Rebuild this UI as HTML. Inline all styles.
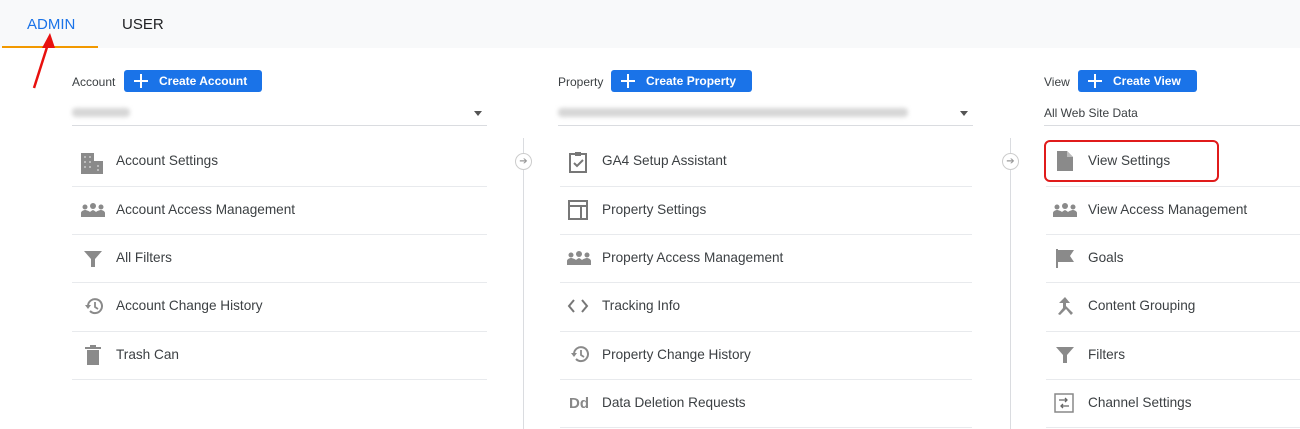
<!DOCTYPE html>
<html><head><meta charset="utf-8"><style>
*{margin:0;padding:0;box-sizing:border-box}
body{width:1300px;height:429px;overflow:hidden;background:#fff;font-family:"Liberation Sans",Arial,sans-serif;position:relative;color:#3c4043}
.a{position:absolute}
.tabbar{left:0;top:0;width:1300px;height:48px;background:#f8f9fa}
.tab{font-size:15px;top:16px}
.lbl{font-size:12px;color:#3c4043;top:75px}
.btn{top:70px;height:22px;background:#1a73e8;border-radius:3px;color:#fff;font-size:12px;font-weight:bold;line-height:22px;padding-left:35px}
.btn:before{content:"";position:absolute;left:10px;top:10px;width:14px;height:2px;background:#fff}
.btn:after{content:"";position:absolute;left:16px;top:4px;width:2px;height:14px;background:#fff}
.blur{top:108px;height:9px;background:#d6d6d6;border-radius:4px;filter:blur(2px)}
.ul{top:125px;height:1px;background:#dadce0}
.caret{top:111px;width:0;height:0;border-left:4px solid transparent;border-right:4px solid transparent;border-top:5px solid #555}
.t{font-size:13.6px;line-height:16px}
.d{height:1px;background:#e8eaed}
.vl{width:1px;background:#dadce0;top:138px;height:291px}
.circ{width:17px;height:17px;border:1px solid #ccc;border-radius:50%;background:#fff;color:#999;font-size:10px;text-align:center;line-height:15px}
svg{position:absolute}
</style></head><body>
<div class="a tabbar"></div>
<div class="a tab" style="left:27px;color:#1a73e8">ADMIN</div>
<div class="a tab" style="left:122px;color:#202124">USER</div>
<div class="a" style="left:2px;top:46px;width:96px;height:2px;background:#f29900"></div>
<svg style="left:30px;top:30px" width="30" height="62"><path d="M4 58 L18 14" stroke="#e8100e" stroke-width="2.5"/><path d="M20 3 L12 18 L25 18 Z" fill="#e8100e"/></svg>

<div class="a lbl" style="left:72px">Account</div>
<div class="a btn" style="left:124px;width:138px">Create Account</div>
<div class="a blur" style="left:72px;width:58px"></div>
<div class="a caret" style="left:474px"></div>
<div class="a ul" style="left:72px;width:415px"></div>

<div class="a lbl" style="left:558px">Property</div>
<div class="a btn" style="left:611px;width:141px">Create Property</div>
<div class="a blur" style="left:558px;width:350px"></div>
<div class="a caret" style="left:960px"></div>
<div class="a ul" style="left:558px;width:415px"></div>

<div class="a lbl" style="left:1044px">View</div>
<div class="a btn" style="left:1078px;width:119px">Create View</div>
<div class="a" style="left:1044px;top:106px;font-size:12px">All Web Site Data</div>
<div class="a ul" style="left:1044px;width:256px"></div>

<div class="a vl" style="left:523px"></div>
<div class="a vl" style="left:1010px"></div>
<div class="a circ" style="left:515px;top:153px">➔</div>
<div class="a circ" style="left:1002px;top:153px">➔</div>

<div class="a t" style="left:116px;top:153px">Account Settings</div>
<div class="a t" style="left:116px;top:202px">Account Access Management</div>
<div class="a t" style="left:116px;top:250px">All Filters</div>
<div class="a t" style="left:116px;top:298px">Account Change History</div>
<div class="a t" style="left:116px;top:347px">Trash Can</div>
<div class="a d" style="left:72px;width:415px;top:186px"></div>
<div class="a d" style="left:72px;width:415px;top:234px"></div>
<div class="a d" style="left:72px;width:415px;top:282px"></div>
<div class="a d" style="left:72px;width:415px;top:331px"></div>
<div class="a d" style="left:72px;width:415px;top:379px"></div>

<svg style="left:80px;top:152px" width="24" height="22"><path d="M1 1h13v21H1z M14 9h9v13h-9z" fill="#8a8a8a"/><g fill="#bbb"><rect x="4" y="4" width="2" height="2"/><rect x="9" y="4" width="2" height="2"/><rect x="4" y="9" width="2" height="2"/><rect x="9" y="9" width="2" height="2"/><rect x="4" y="14" width="2" height="2"/><rect x="9" y="14" width="2" height="2"/><rect x="17" y="13" width="2" height="2"/><rect x="17" y="17" width="2" height="2"/></g></svg>
<svg style="left:81px;top:203px" width="24" height="14"><g fill="#8a8a8a"><circle cx="12" cy="3" r="3"/><circle cx="4" cy="4" r="2.5"/><circle cx="20" cy="4" r="2.5"/><path d="M0 14v-4c0-2 3-3 4-3s4 1 5 2c1-1 3-2 3-2s2 1 3 2c1-1 4-2 5-2s4 1 4 3v4z"/></g></svg>
<svg style="left:83px;top:250px" width="20" height="18"><path d="M1 1h18l-7 8v8h-4v-8z" fill="#8a8a8a"/></svg>
<svg style="left:84px;top:297px" width="20" height="18"><path d="M4 9a7 7 0 1 1 2 5" fill="none" stroke="#8a8a8a" stroke-width="2"/><path d="M1 8l3 4 3-4z" fill="#8a8a8a"/><path d="M11 5v5l3 2" fill="none" stroke="#8a8a8a" stroke-width="1.8"/></svg>
<svg style="left:85px;top:345px" width="16" height="20"><path d="M0 2h16v2H0z M5 0h6v2H5z M2 5h12v15H2z" fill="#8a8a8a"/></svg>

<div class="a t" style="left:602px;top:153px">GA4 Setup Assistant</div>
<div class="a t" style="left:602px;top:202px">Property Settings</div>
<div class="a t" style="left:602px;top:250px">Property Access Management</div>
<div class="a t" style="left:602px;top:298px">Tracking Info</div>
<div class="a t" style="left:602px;top:347px">Property Change History</div>
<div class="a t" style="left:602px;top:395px">Data Deletion Requests</div>
<div class="a d" style="left:560px;width:412px;top:186px"></div>
<div class="a d" style="left:560px;width:412px;top:234px"></div>
<div class="a d" style="left:560px;width:412px;top:282px"></div>
<div class="a d" style="left:560px;width:412px;top:331px"></div>
<div class="a d" style="left:560px;width:412px;top:379px"></div>
<div class="a d" style="left:560px;width:412px;top:427px"></div>

<svg style="left:568px;top:151px" width="20" height="22"><path d="M2 3h16v18H2z" fill="none" stroke="#777" stroke-width="2"/><path d="M7 1h6v4H7z" fill="#777"/><path d="M6 12l3 3 6-6" fill="none" stroke="#777" stroke-width="2"/></svg>
<svg style="left:568px;top:200px" width="20" height="20"><path d="M1 1h18v18H1z M1 6h18 M13 6v13" fill="none" stroke="#777" stroke-width="2"/></svg>
<svg style="left:567px;top:251px" width="24" height="14"><g fill="#8a8a8a"><circle cx="12" cy="3" r="3"/><circle cx="4" cy="4" r="2.5"/><circle cx="20" cy="4" r="2.5"/><path d="M0 14v-4c0-2 3-3 4-3s4 1 5 2c1-1 3-2 3-2s2 1 3 2c1-1 4-2 5-2s4 1 4 3v4z"/></g></svg>
<svg style="left:567px;top:299px" width="22" height="14"><path d="M7 1L2 7l5 6 M15 1l5 6-5 6" fill="none" stroke="#777" stroke-width="2"/></svg>
<svg style="left:570px;top:345px" width="20" height="18"><path d="M4 9a7 7 0 1 1 2 5" fill="none" stroke="#8a8a8a" stroke-width="2"/><path d="M1 8l3 4 3-4z" fill="#8a8a8a"/><path d="M11 5v5l3 2" fill="none" stroke="#8a8a8a" stroke-width="1.8"/></svg>
<div class="a" style="left:569px;top:395px;font-size:15px;font-weight:bold;color:#888">Dd</div>

<div class="a" style="left:1044px;top:140px;width:175px;height:42px;border:2px solid #e01b1b;border-radius:6px"></div>
<div class="a t" style="left:1088px;top:153px">View Settings</div>
<div class="a t" style="left:1088px;top:202px">View Access Management</div>
<div class="a t" style="left:1088px;top:250px">Goals</div>
<div class="a t" style="left:1088px;top:298px">Content Grouping</div>
<div class="a t" style="left:1088px;top:347px">Filters</div>
<div class="a t" style="left:1088px;top:395px">Channel Settings</div>
<div class="a d" style="left:1046px;width:254px;top:186px"></div>
<div class="a d" style="left:1046px;width:254px;top:234px"></div>
<div class="a d" style="left:1046px;width:254px;top:282px"></div>
<div class="a d" style="left:1046px;width:254px;top:331px"></div>
<div class="a d" style="left:1046px;width:254px;top:379px"></div>
<div class="a d" style="left:1046px;width:254px;top:427px"></div>

<svg style="left:1057px;top:151px" width="16" height="20"><path d="M0 0h10l6 6v14H0z" fill="#8a8a8a"/><path d="M10 0v6h6z" fill="#bbb"/></svg>
<svg style="left:1053px;top:203px" width="24" height="14"><g fill="#8a8a8a"><circle cx="12" cy="3" r="3"/><circle cx="4" cy="4" r="2.5"/><circle cx="20" cy="4" r="2.5"/><path d="M0 14v-4c0-2 3-3 4-3s4 1 5 2c1-1 3-2 3-2s2 1 3 2c1-1 4-2 5-2s4 1 4 3v4z"/></g></svg>
<svg style="left:1055px;top:248px" width="20" height="20"><path d="M1 1h2v19H1z M3 2h16l-4 6 4 6H3z" fill="#8a8a8a"/></svg>
<svg style="left:1056px;top:296px" width="20" height="20"><path d="M9 1l-6 6h4v5l-5 6 2 1 6-6 5 6 2-2-7-7V7h4z" fill="#8a8a8a"/></svg>
<svg style="left:1055px;top:346px" width="20" height="18"><path d="M1 1h18l-7 8v8h-4v-8z" fill="#8a8a8a"/></svg>
<svg style="left:1054px;top:393px" width="20" height="20"><path d="M1 1h18v18H1z" fill="none" stroke="#888" stroke-width="1.5"/><path d="M5 7h8 M11 5l2 2-2 2 M7 13h8 M9 11l-2 2 2 2" fill="none" stroke="#666" stroke-width="1.3"/></svg>
</body></html>
